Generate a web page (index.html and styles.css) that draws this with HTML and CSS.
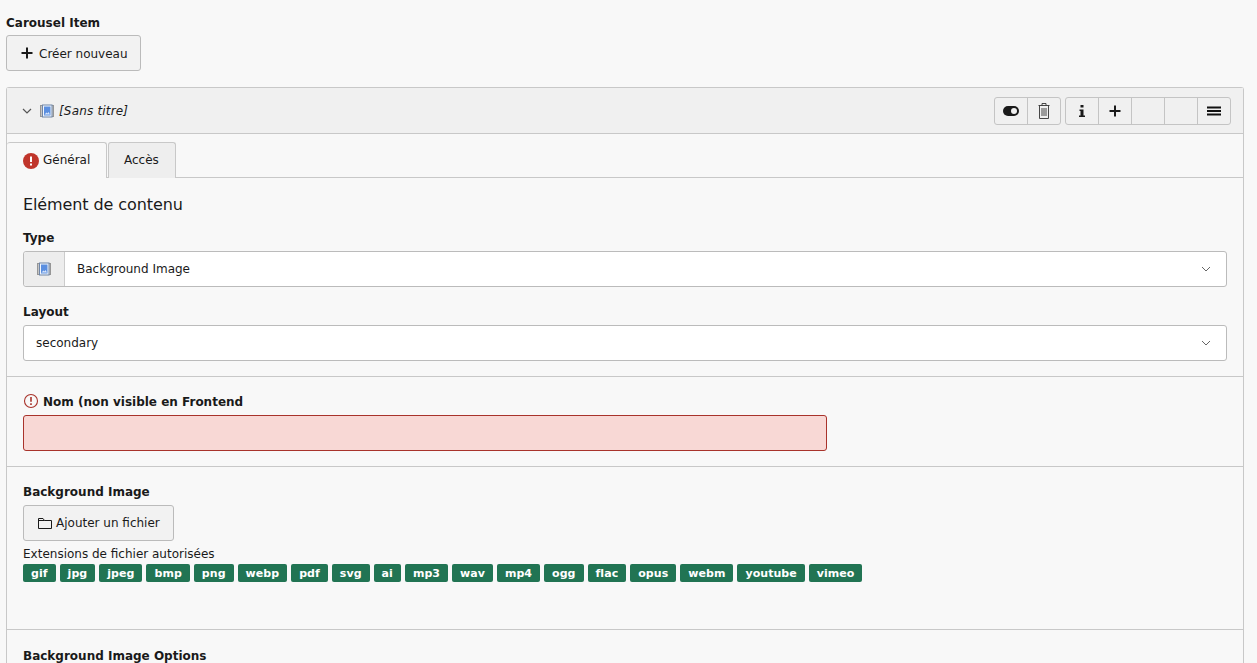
FILE: index.html
```html
<!DOCTYPE html>
<html lang="fr">
<head>
	<meta charset="UTF-8">
	<title>Carousel Item</title>
	<link rel="stylesheet" href="styles.css">
</head>
<body>
	<label class="lbl top-lbl">Carousel Item</label>
	<button class="btn new-btn">
		<svg class="ico" viewBox="0 0 16 16"><path d="M2.500 8h11M8 2.500v11" stroke="#1a1a1a" stroke-width="2" fill="none"/></svg>
		<span>Créer nouveau</span>
	</button>

	<div class="panel">
		<div class="panel-head">
			<svg class="chev" viewBox="0 0 12 12"><path d="M2 4l4 4 4-4" stroke="#555" stroke-width="1.2" fill="none"/></svg>
			<svg class="ico-img" viewBox="0 0 14 14"><rect x="0.5" y="1.5" width="13" height="11" fill="#c4c4c4" stroke="#969696"/><rect x="2.5" y="1" width="9.5" height="12" fill="#f2f6fc" stroke="#6f86a8"/><rect x="4" y="2.5" width="6.500" height="9" fill="#5b8fe0"/><path d="M4.500 10.500l2-2 1 1 1-1.500 1.500 2.500z" fill="#d8e6fa"/></svg>
			<em class="title">[Sans titre]</em>
			<div class="head-btns">
				<div class="grp">
					<span class="sq"><svg class="ico" viewBox="0 0 16 16"><rect x="0" y="3" width="16" height="10" rx="5" fill="#1a1a1a"/><circle cx="11" cy="8" r="3" fill="#f0f0f0"/></svg></span>
					<span class="sq"><svg class="ico" viewBox="0 0 16 16"><path d="M2.500 2.500h11M6 2.500v-2h4v2M3.500 2.500v13h9v-13M6 5v8M8 5v8M10 5v8" stroke="#333" stroke-width=".9" fill="none"/></svg></span>
				</div>
				<div class="grp">
					<span class="sq"><svg class="ico" viewBox="0 0 16 16"><path d="M6.500 2h3v2.500h-3zM5.500 6.500h4v6h1.500v1.500h-6v-1.500h1.500v-4.500h-1z" fill="#1a1a1a"/></svg></span>
					<span class="sq"><svg class="ico" viewBox="0 0 16 16"><path d="M2.500 8h11M8 2.500v11" stroke="#1a1a1a" stroke-width="2" fill="none"/></svg></span>
					<span class="sq"></span>
					<span class="sq"></span>
					<span class="sq"><svg class="ico" viewBox="0 0 16 16"><path d="M1 4.500h14M1 8h14M1 11.500h14" stroke="#111" stroke-width="2" fill="none"/></svg></span>
				</div>
			</div>
		</div>

		<div class="tabs">
			<div class="tab on">
				<svg class="ico err" viewBox="0 0 16 16"><circle cx="8" cy="8" r="8" fill="#c0352b"/><path d="M8 3.500v5.500M8 10.500v2" stroke="#fff" stroke-width="2" fill="none"/></svg>
				<span>Général</span>
			</div>
			<div class="tab">Accès</div>
		</div>

		<div class="sec first">
			<h4>Elément de contenu</h4>
			<label class="lbl">Type</label>
			<div class="sel">
				<span class="addon"><svg class="ico-img" viewBox="0 0 14 14"><rect x="0.5" y="1.500" width="13" height="11" fill="#c4c4c4" stroke="#969696"/><rect x="2.500" y="1" width="9.500" height="12" fill="#f2f6fc" stroke="#6f86a8"/><rect x="4" y="2.500" width="6.500" height="9" fill="#5b8fe0"/><path d="M4.500 10.500l2-2 1 1 1-1.500 1.500 2.500z" fill="#d8e6fa"/></svg></span>
				<span class="val">Background Image</span>
				<svg class="chev sel-chev" viewBox="0 0 12 12"><path d="M2 4l4 4 4-4" stroke="#666" stroke-width="1" fill="none"/></svg>
			</div>
			<label class="lbl lay">Layout</label>
			<div class="sel">
				<span class="val">secondary</span>
				<svg class="chev sel-chev" viewBox="0 0 12 12"><path d="M2 4l4 4 4-4" stroke="#666" stroke-width="1" fill="none"/></svg>
			</div>
		</div>

		<div class="sec nom">
			<label class="lbl">
				<svg class="ico warn" viewBox="0 0 16 16"><circle cx="8" cy="8" r="6.500" stroke="#a8332b" stroke-width="1.100" fill="none"/><path d="M8 4v4.800M8 10.200v1.800" stroke="#a8332b" stroke-width="1.600" fill="none"/></svg>
				<span>Nom (non visible en Frontend</span>
			</label>
			<div class="inp-err"></div>
		</div>

		<div class="sec bg">
			<label class="lbl">Background Image</label>
			<button class="btn add-btn">
				<svg class="ico" viewBox="0 0 16 16"><path d="M1.500 13.500v-10h4.500l1.500 2h7v8zM1.500 5.500h6" stroke="#1a1a1a" fill="none"/></svg>
				<span>Ajouter un fichier</span>
			</button>
			<div class="ext">Extensions de fichier autorisées</div>
			<div class="badges">
				<span>gif</span><span>jpg</span><span>jpeg</span><span>bmp</span><span>png</span><span>webp</span><span>pdf</span><span>svg</span><span>ai</span><span>mp3</span><span>wav</span><span>mp4</span><span>ogg</span><span>flac</span><span>opus</span><span>webm</span><span>youtube</span><span>vimeo</span>
			</div>
		</div>

		<div class="sec opts">
			<label class="lbl">Background Image Options</label>
		</div>
	</div>
</body>
</html>
```

FILE: styles.css
```css
*{margin: 0;padding: 0;box-sizing: border-box;}
html,body{height: 663px;overflow: hidden;}
body{background: #f8f8f8;color: #1a1a1a;font: 12px/18px "DejaVu Sans",Verdana,sans-serif;padding: 13px 13px 0 6px;}
.lbl{display: block;font-weight: bold;height: 18px;line-height: 20px;}
.top-lbl{margin-bottom: 4px;}
.btn{display: flex;align-items: center;height: 36px;border: 1px solid #bbb;border-radius: 3px;background: #f2f2f2;color: #1a1a1a;font: inherit;}
.new-btn span{position: relative;top: 1px;}
.new-btn{width: 135px;padding-left: 12px;gap: 4px;}
.add-btn{width: 151px;padding-left: 13px;gap: 3px;}
.ico{width: 16px;height: 16px;display: block;flex: none;}
.ico-img{width: 14px;height: 14px;display: block;flex: none;}
.chev{width: 12px;height: 12px;display: block;flex: none;}
.panel{margin-top: 16px;border: 1px solid #c8c8c8;border-bottom: 0;border-radius: 3px 3px 0 0;height: 600px;}
.panel-head{display: flex;align-items: center;height: 46px;background: #f0f0f0;border-bottom: 1px solid #c8c8c8;padding: 0 12px 0 14px;}
.panel-head .ico-img{margin-left: 7px;}
.title{margin-left: 5px;letter-spacing: .18px;}
.head-btns{margin-left: auto;display: flex;gap: 4px;}
.grp{display: flex;border: 1px solid #c4c4c4;border-radius: 3px;height: 28px;}
.sq{width: 33px;display: flex;align-items: center;justify-content: center;border-left: 1px solid #c4c4c4;}
.sq:first-child{border-left: 0;width: 32px;}
.tabs{display: flex;gap: 1px;padding-top: 8px;border-bottom: 1px solid #c8c8c8;height: 44px;}
.tab{display: flex;align-items: center;height: 36px;padding: 0 16px 2px 15px;border: 1px solid #c8c8c8;border-bottom: 0;border-radius: 3px 3px 0 0;background: #eee;}
.tab.on{background: #f8f8f8;height: 36px;width: 100px;gap: 4px;border-left: 0;padding: 0 0 0 16px;margin-bottom: -1px;}
.tab.on span{position: relative;top: -1px;}
.sec{border-bottom: 1px solid #c8c8c8;padding: 0 16px;}
.first{height: 199px;padding-top: 16px;}
h4{font-size: 16px;font-weight: normal;line-height: 22px;height: 20px;margin-bottom: 14px;letter-spacing: -.1px;}
.sel{display: flex;align-items: center;height: 36px;margin-top: 5px;background: #fff;border: 1px solid #bbb;border-radius: 3px;}
.addon{width: 41px;height: 34px;display: flex;align-items: center;justify-content: center;background: #ededed;border-right: 1px solid #ccc;border-radius: 3px 0 0 3px;}
.val{padding-left: 12px;}
.sel-chev{margin-left: auto;margin-right: 14px;}
.lay{margin-top: 15px;}
.nom{height: 90px;padding-top: 15px;}
.nom .lbl{display: flex;align-items: center;gap: 4px;}
.nom .lbl span{position: relative;top: 1px;}
.inp-err{width: 804px;height: 36px;margin-top: 5px;background: #f8d8d5;border: 1px solid #a8332b;border-radius: 3px;}
.bg{height: 163px;padding-top: 15px;}
.add-btn{margin-top: 5px;}
.ext{margin-top: 3px;height: 18px;line-height: 20px;}
.badges{display: flex;gap: 4px;margin-top: 2px;}
.badges span{display: block;height: 18px;padding: 0 8px;background: #217453;color: #fff;border-radius: 2px;font-size: 11px;font-weight: bold;line-height: 20px;letter-spacing: .05px;}
.opts{border: 0;padding-top: 16px;}
```
